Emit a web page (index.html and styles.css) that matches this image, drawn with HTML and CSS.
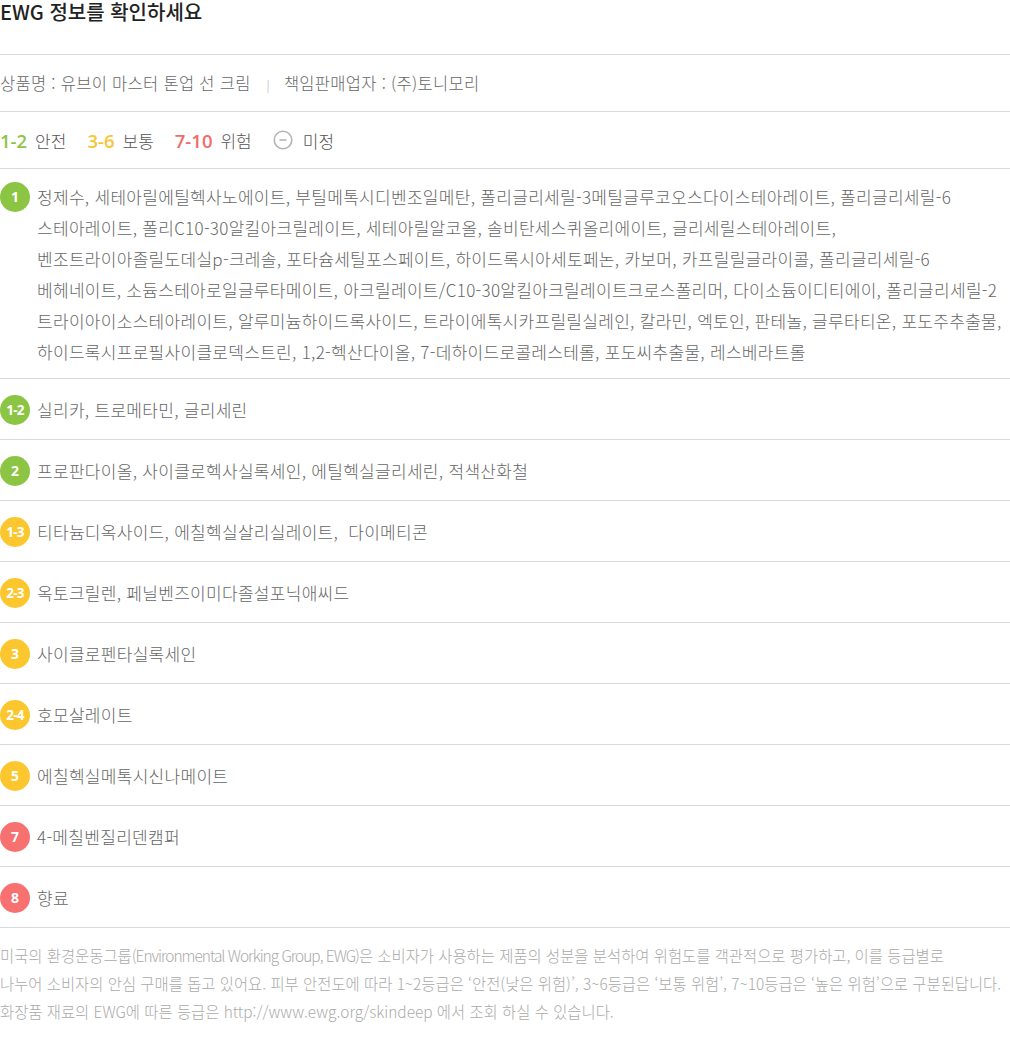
FILE: index.html
```html
<!DOCTYPE html>
<html lang="ko">
<head>
<meta charset="UTF-8">
<meta name="viewport" content="width=device-width, initial-scale=1.0">
<title>EWG 정보</title>
<link rel="stylesheet" href="styles.css">
</head>
<body>

<div class="ewg">
    <h2 class="ewg-title">EWG 정보를 확인하세요</h2>

    <div class="product">
        <span>상품명 : 유브이 마스터 톤업 선 크림</span>
        <span class="divider">|</span>
        <span>책임판매업자 : (주)토니모리</span>
    </div>

    <div class="legend">
        <span class="level green">1-2</span><span class="label">안전</span>
        <span class="level yellow">3-6</span><span class="label">보통</span>
        <span class="level red">7-10</span><span class="label">위험</span>
        <svg class="unknown" width="20" height="20" viewBox="0 0 20 20">
            <circle cx="10" cy="10" r="8.8" fill="none" stroke="#b4b4b4" stroke-width="1.6"/>
            <line x1="6.5" y1="10" x2="13.5" y2="10" stroke="#b4b4b4" stroke-width="1.6"/>
        </svg><span class="label">미정</span>
    </div>

    <ul class="ingredients">
        <li class="ingredient long">
            <span class="grade green">1</span>
            <p>정제수, 세테아릴에틸헥사노에이트, 부틸메톡시디벤조일메탄, 폴리글리세릴-3메틸글루코오스다이스테아레이트, 폴리글리세릴-6 스테아레이트, 폴리C10-30알킬아크릴레이트, 세테아릴알코올, 솔비탄세스퀴올리에이트, 글리세릴스테아레이트, 벤조트라이아졸릴도데실p-크레솔, 포타슘세틸포스페이트, 하이드록시아세토페논, 카보머, 카프릴릴글라이콜, 폴리글리세릴-6 베헤네이트, 소듐스테아로일글루타메이트, 아크릴레이트/C10-30알킬아크릴레이트크로스폴리머, 다이소듐이디티에이, 폴리글리세릴-2 트라이아이소스테아레이트, 알루미늄하이드록사이드, 트라이에톡시카프릴릴실레인, 칼라민, 엑토인, 판테놀, 글루타티온, 포도주추출물, 하이드록시프로필사이클로덱스트린, 1,2-헥산다이올, 7-데하이드로콜레스테롤, 포도씨추출물, 레스베라트롤</p>
        </li>
        <li class="ingredient">
            <span class="grade green small">1-2</span>
            <p>실리카, 트로메타민, 글리세린</p>
        </li>
        <li class="ingredient">
            <span class="grade green">2</span>
            <p>프로판다이올, 사이클로헥사실록세인, 에틸헥실글리세린, 적색산화철</p>
        </li>
        <li class="ingredient">
            <span class="grade yellow small">1-3</span>
            <p>티타늄디옥사이드, 에칠헥실살리실레이트,&nbsp; 다이메티콘</p>
        </li>
        <li class="ingredient">
            <span class="grade yellow small">2-3</span>
            <p>옥토크릴렌, 페닐벤즈이미다졸설포닉애씨드</p>
        </li>
        <li class="ingredient">
            <span class="grade yellow">3</span>
            <p>사이클로펜타실록세인</p>
        </li>
        <li class="ingredient">
            <span class="grade yellow small">2-4</span>
            <p>호모살레이트</p>
        </li>
        <li class="ingredient">
            <span class="grade yellow">5</span>
            <p>에칠헥실메톡시신나메이트</p>
        </li>
        <li class="ingredient">
            <span class="grade red">7</span>
            <p>4-메칠벤질리덴캠퍼</p>
        </li>
        <li class="ingredient">
            <span class="grade red">8</span>
            <p>향료</p>
        </li>
    </ul>

    <p class="note">미국의 환경운동그룹<span class="latin">(Environmental Working Group, EWG)</span>은 소비자가 사용하는 제품의 성분을 분석하여 위험도를 객관적으로 평가하고, 이를 등급별로<br>
    나누어 소비자의 안심 구매를 돕고 있어요. 피부 안전도에 따라 1~2등급은 ‘안전(낮은 위험)’, 3~6등급은 ‘보통 위험’, 7~10등급은 ‘높은 위험’으로 구분된답니다.<br>
    화장품 재료의 EWG에 따른 등급은 http://www.ewg.org/skindeep 에서 조회 하실 수 있습니다.</p>
</div>

</body>
</html>
```

FILE: styles.css
```css
body {
    margin: 0;
    background: #fff;
    font-family: "Noto Sans CJK KR", "Noto Sans", sans-serif;
    color: #666;
}

.ewg {
    width: 1010px;
    word-break: keep-all;
}

.ewg-title {
    margin: 0;
    padding-bottom: 30px;
    font-size: 20px;
    line-height: 24px;
    font-weight: 500;
    color: #222;
    border-bottom: 1px solid #d9d9d9;
}

.product {
    height: 56px;
    line-height: 56px;
    font-size: 16.5px;
    letter-spacing: 0.3px;
    font-weight: 300;
    color: #666;
    border-bottom: 1px solid #d9d9d9;
}

.product .divider {
    margin: 0 9px 0 11px;
    font-size: 12px;
    color: #aaa;
}

.legend {
    display: flex;
    align-items: center;
    height: 56px;
    border-bottom: 1px solid #d9d9d9;
}

.legend .level {
    font-family: "Open Sans", sans-serif;
    font-weight: 600;
    font-size: 18.5px;
    margin-right: 8px;
}

.legend .label {
    font-size: 17px;
    font-weight: 300;
    color: #555;
    margin-right: 21px;
}

.legend .unknown {
    margin-right: 10px;
}

.level.green { color: #8cc543; }
.level.yellow { color: #f8c536; }
.level.red { color: #f26a6a; }

.ingredients {
    list-style: none;
    margin: 0;
    padding: 0;
}

.ingredient {
    display: flex;
    align-items: flex-start;
    padding: 15px 0 14px;
    border-bottom: 1px solid #d9d9d9;
}

.ingredient.long {
    padding: 12px 0 11px;
}

.ingredient p {
    margin: 0;
    flex: 1;
    font-size: 17px;
    letter-spacing: 0.3px;
    line-height: 31px;
    font-weight: 300;
    color: #666;
}

.grade {
    flex: none;
    width: 30px;
    height: 30px;
    margin: 0.5px 7px 0 0;
    border-radius: 50%;
    color: #fff;
    font-family: "Open Sans", sans-serif;
    font-weight: 700;
    font-size: 14px;
    line-height: 30px;
    text-align: center;
}

.grade.small {
    font-size: 13.5px;
    letter-spacing: -0.8px;
}

.grade.green { background: #8cc543; }
.grade.yellow { background: #fcc62f; }
.grade.red { background: #f77171; }

.note {
    margin: 0;
    padding-top: 13px;
    font-size: 15.4px;
    line-height: 28px;
    font-weight: 300;
    color: #aaa;
    white-space: nowrap;
}

.note .latin {
    letter-spacing: -1px;
}
```
